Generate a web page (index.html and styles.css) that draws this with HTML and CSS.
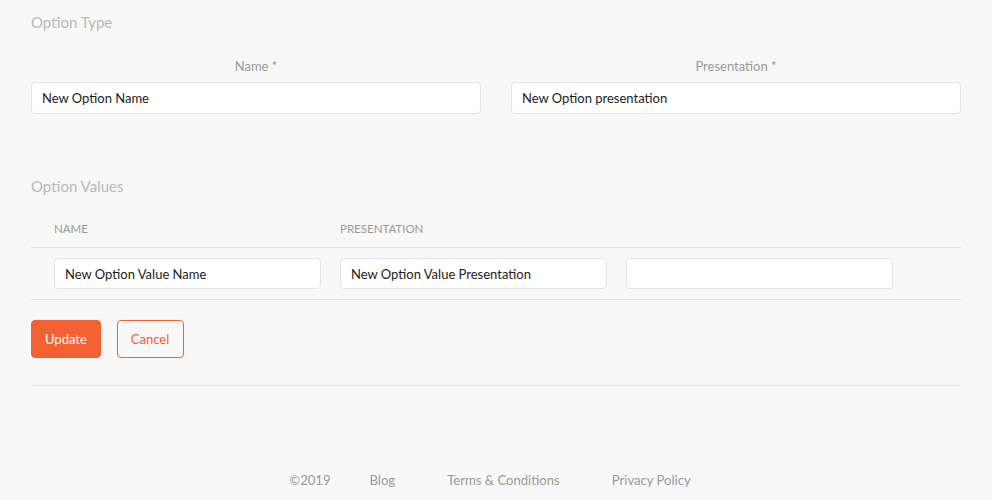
FILE: index.html
```html
<!DOCTYPE html>
<html>
<head>
<meta charset="utf-8">
<link rel="stylesheet" href="styles.css">
</head>
<body>
<div class="page">
  <h2 class="section-title">Option Type</h2>
  <div class="fields">
    <div class="field">
      <label class="field-label">Name *</label>
      <input class="input" type="text" value="New Option Name">
    </div>
    <div class="field">
      <label class="field-label">Presentation *</label>
      <input class="input" type="text" value="New Option presentation">
    </div>
  </div>

  <h2 class="section-title values-title">Option Values</h2>
  <div class="table">
    <div class="thead">
      <div class="th">Name</div>
      <div class="th">Presentation</div>
      <div class="th"></div>
    </div>
    <div class="trow">
      <input class="input small" type="text" value="New Option Value Name">
      <input class="input small" type="text" value="New Option Value Presentation">
      <input class="input small" type="text" value="">
    </div>
  </div>

  <div class="actions">
    <button class="btn btn-primary">Update</button>
    <button class="btn btn-outline">Cancel</button>
  </div>
  <hr class="divider">

  <footer class="footer">
    <span class="copy">©2019</span>
    <a class="flink">Blog</a>
    <a class="flink">Terms &amp; Conditions</a>
    <a class="flink">Privacy Policy</a>
  </footer>
</div>
</body>
</html>
```
FILE: styles.css
```css
* { box-sizing: border-box; }
html, body { margin: 0; padding: 0; }
body {
  background: #f8f8f8;
  font-family: Lato, "Open Sans", sans-serif;
  color: #222;
  width: 992px;
  height: 500px;
  overflow: hidden;
}
.page {
  padding: 12px 31px 0 31px;
}
.section-title {
  margin: 0;
  font-size: 15px;
  font-weight: 400;
  color: #b8b8b8;
  line-height: 20px;
}
.fields {
  display: grid;
  grid-template-columns: 450px 450px;
  column-gap: 30px;
  margin-top: 26px;
}
.field { display: flex; flex-direction: column; }
.field-label {
  text-align: center;
  font-size: 13px;
  color: #999;
  line-height: 16px;
  margin-bottom: 8px;
}
.input {
  display: block;
  height: 32px;
  border: 1px solid #e4e4e4;
  border-radius: 4px;
  background: #fff;
  padding: 0 10px;
  font-family: Lato, "Open Sans", sans-serif;
  font-size: 13px;
  color: #222;
  outline: none;
  width: 100%;
}
.values-title { margin-top: 62px; }
.table { margin-top: 12px; }
.thead, .trow {
  display: grid;
  grid-template-columns: 267px 267px 267px;
  column-gap: 19px;
  padding-left: 23px;
}
.thead {
  height: 40px;
  border-bottom: 1px solid #e2e2e2;
}
.th {
  font-size: 11.5px;
  text-transform: uppercase;
  color: #999;
  line-height: 16px;
  padding-top: 13px;
}
.trow {
  padding-top: 10px;
  padding-bottom: 10px;
  border-bottom: 1px solid #e2e2e2;
}
.input.small { height: 31px; }
.actions {
  display: flex;
  gap: 16px;
  margin-top: 20px;
}
.btn {
  height: 38px;
  border-radius: 4px;
  font-family: Lato, "Open Sans", sans-serif;
  font-size: 13px;
  padding: 0 13px;
  cursor: pointer;
}
.btn-primary {
  background: #f36031;
  border: 1px solid #f36031;
  color: #fff;
}
.btn-outline {
  background: transparent;
  border: 1px solid #f36031;
  color: #f36031;
  padding: 0 14px 0 13px;
}
.divider {
  margin: 27px 0 0 0;
  border: 0;
  border-top: 1px solid #e4e4e4;
}
.footer {
  display: flex;
  justify-content: center;
  align-items: center;
  margin-top: 86px;
  padding-right: 12px;
  font-size: 13.1px;
  color: #999;
  line-height: 16px;
}
.copy { margin-right: 39px; }
.flink { color: #999; text-decoration: none; margin-right: 52px; }
.flink:last-child { margin-right: 0; }
```
